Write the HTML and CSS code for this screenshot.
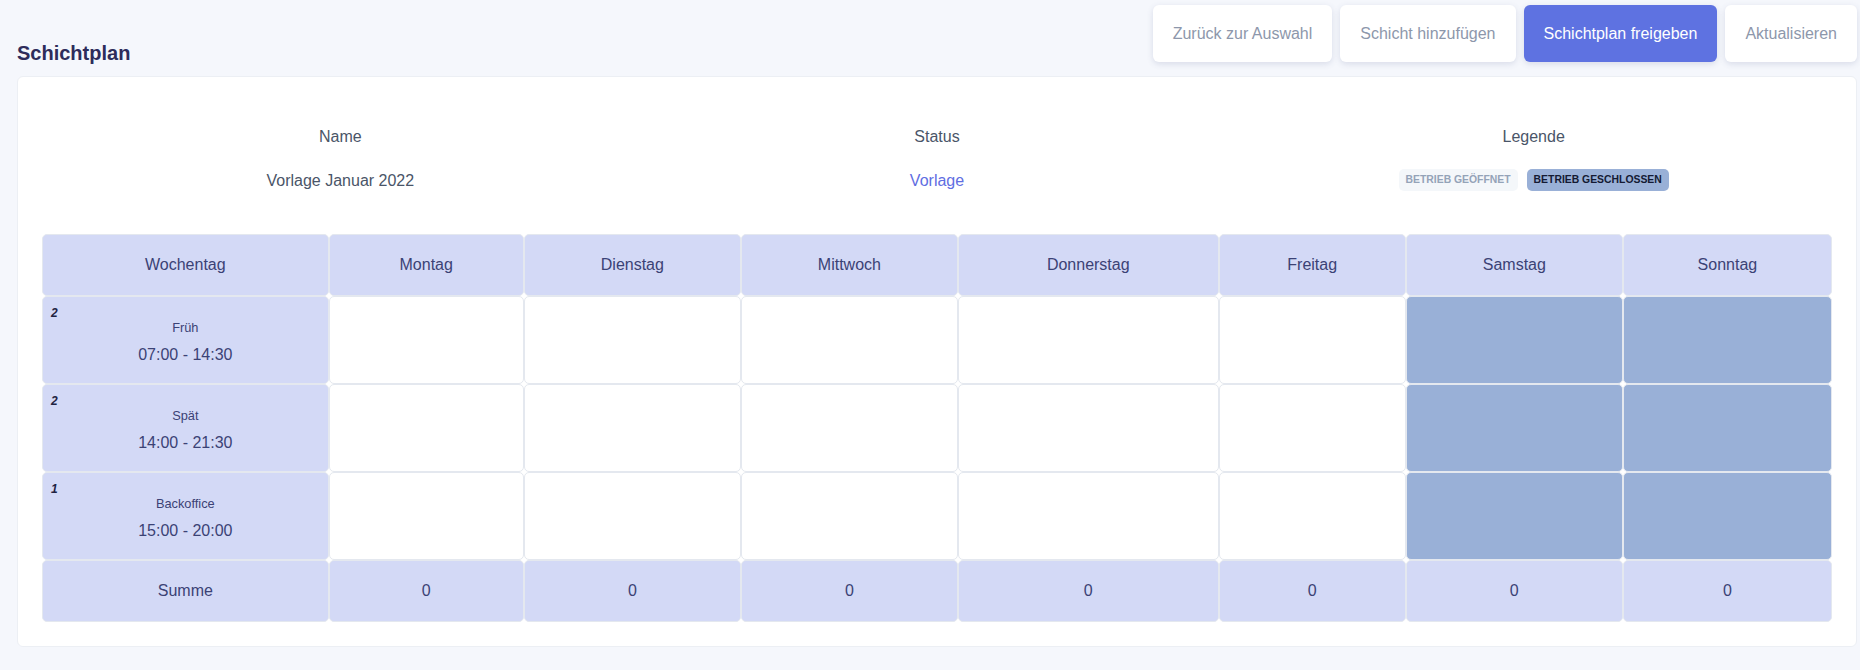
FILE: index.html
```html
<!DOCTYPE html>
<html lang="de">
<head>
<meta charset="utf-8">
<title>Schichtplan</title>
<link rel="stylesheet" href="styles.css">
</head>
<body>
<div class="page">
  <header class="topbar">
    <h1 class="title">Schichtplan</h1>
    <div class="actions">
      <button class="btn">Zurück zur Auswahl</button>
      <button class="btn">Schicht hinzufügen</button>
      <button class="btn btn-primary">Schichtplan freigeben</button>
      <button class="btn">Aktualisieren</button>
    </div>
  </header>

  <section class="card">
    <div class="info">
      <div class="info-col">
        <div class="info-label">Name</div>
        <div class="info-value">Vorlage Januar 2022</div>
      </div>
      <div class="info-col">
        <div class="info-label">Status</div>
        <div class="info-value status">Vorlage</div>
      </div>
      <div class="info-col">
        <div class="info-label">Legende</div>
        <div class="info-value legend">
          <span class="badge badge-open">BETRIEB GEÖFFNET</span>
          <span class="badge badge-closed">BETRIEB GESCHLOSSEN</span>
        </div>
      </div>
    </div>

    <table class="plan">
      <thead>
        <tr>
          <th class="head">Wochentag</th>
          <th class="head">Montag</th>
          <th class="head">Dienstag</th>
          <th class="head">Mittwoch</th>
          <th class="head">Donnerstag</th>
          <th class="head">Freitag</th>
          <th class="head">Samstag</th>
          <th class="head">Sonntag</th>
        </tr>
      </thead>
      <tbody>
        <tr>
          <td class="shift"><span class="count">2</span><div class="shift-name">Früh</div><div class="shift-time">07:00 - 14:30</div></td>
          <td class="slot"></td><td class="slot"></td><td class="slot"></td><td class="slot"></td><td class="slot"></td>
          <td class="slot closed"></td><td class="slot closed"></td>
        </tr>
        <tr>
          <td class="shift"><span class="count">2</span><div class="shift-name">Spät</div><div class="shift-time">14:00 - 21:30</div></td>
          <td class="slot"></td><td class="slot"></td><td class="slot"></td><td class="slot"></td><td class="slot"></td>
          <td class="slot closed"></td><td class="slot closed"></td>
        </tr>
        <tr>
          <td class="shift"><span class="count">1</span><div class="shift-name">Backoffice</div><div class="shift-time">15:00 - 20:00</div></td>
          <td class="slot"></td><td class="slot"></td><td class="slot"></td><td class="slot"></td><td class="slot"></td>
          <td class="slot closed"></td><td class="slot closed"></td>
        </tr>
      </tbody>
      <tfoot>
        <tr>
          <td class="head">Summe</td>
          <td class="head">0</td>
          <td class="head">0</td>
          <td class="head">0</td>
          <td class="head">0</td>
          <td class="head">0</td>
          <td class="head">0</td>
          <td class="head">0</td>
        </tr>
      </tfoot>
    </table>
  </section>
</div>
</body>
</html>
```

FILE: styles.css
```css
* {
  box-sizing: border-box;
}

html, body {
  margin: 0;
  padding: 0;
  background: #f5f7fc;
}

body {
  font-family: "Liberation Sans", Arial, sans-serif;
  font-size: 16px;
  color: #4a5568;
}

.page {
  padding: 5px 3px 0 17px;
}

.topbar {
  display: flex;
  justify-content: space-between;
  align-items: flex-end;
  margin-bottom: 9px;
}

.title {
  margin: 0;
  font-size: 20px;
  line-height: 28px;
  font-weight: 700;
  color: #2e2c5b;
}

.actions {
  display: flex;
  gap: 8px;
  margin-bottom: 5px;
}

.btn {
  font-family: "Liberation Sans", Arial, sans-serif;
  font-size: 16px;
  line-height: 24px;
  padding: 16.5px 20px;
  border: none;
  border-radius: 6px;
  background: #ffffff;
  color: #8d97ab;
  box-shadow: 0 2px 6px rgba(70, 80, 130, 0.16);
  cursor: pointer;
}

.btn-primary {
  background: #5e72e1;
  color: #ffffff;
}

.card {
  background: #ffffff;
  border: 1px solid #eceff4;
  border-radius: 6px;
  padding: 24px;
}

.info {
  display: grid;
  grid-template-columns: repeat(3, 1fr);
  padding-top: 24px;
  margin-bottom: 41px;
}

.info-col {
  display: flex;
  flex-direction: column;
  align-items: center;
  gap: 20px;
}

.info-label,
.info-value {
  line-height: 24px;
  color: #4a5568;
}

.status {
  color: #5f6ee2;
}

.legend {
  display: flex;
  gap: 9px;
  align-items: center;
}

.badge {
  display: inline-block;
  font-size: 10.4px;
  font-weight: 700;
  line-height: 16px;
  padding: 3px 7px;
  border-radius: 5px;
}

.badge-open {
  background: #f4f7fa;
  color: #94a3b8;
}

.badge-closed {
  background: #99b0d7;
  color: #141a33;
}

.plan {
  width: 100%;
  border-collapse: separate;
  border-spacing: 0;
  table-layout: auto;
}

.plan th,
.plan td {
  border: 1px solid #e4e8ef;
  border-radius: 5px;
  text-align: center;
  vertical-align: middle;
  font-weight: 400;
  color: #3b4275;
}

.head {
  background: #d3d9f6;
  padding: 18px 16px;
  line-height: 24px;
}

.slot {
  background: #ffffff;
  padding: 0 16px;
}

.slot.closed {
  background: #99b0d7;
}

.shift {
  position: relative;
  background: #d3d9f6;
  padding: 22px 16px 16px;
  vertical-align: top;
}

.count {
  position: absolute;
  top: 9px;
  left: 8px;
  font-size: 12px;
  line-height: 14px;
  font-weight: 700;
  font-style: italic;
  color: #1f2343;
}

.shift-name {
  font-size: 12.8px;
  line-height: 18px;
  margin-bottom: 6px;
  color: #3b4275;
}

.shift-time {
  font-size: 16px;
  line-height: 24px;
  color: #3b4275;
}
```
